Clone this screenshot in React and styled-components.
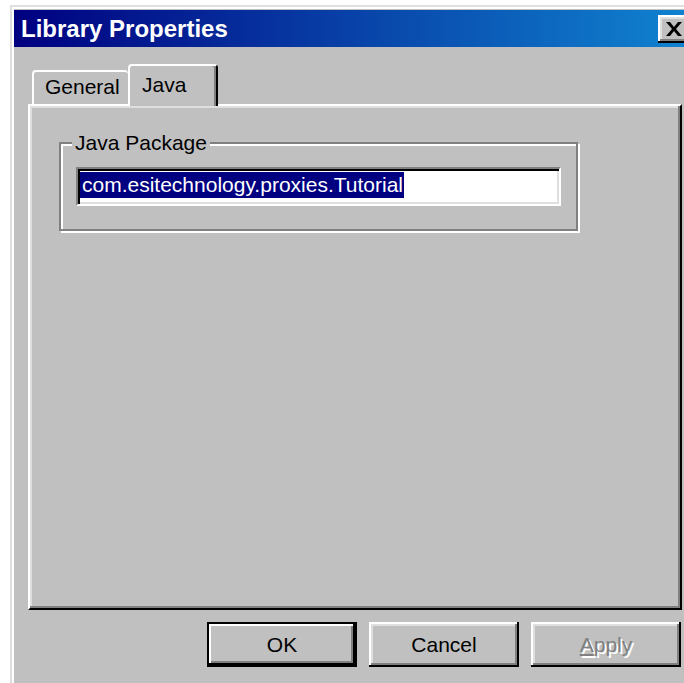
import React from "react";
import styled, { createGlobalStyle } from "styled-components";

const GlobalStyle = createGlobalStyle`
  html, body {
    margin: 0;
    padding: 0;
    background: #ffffff;
    overflow: hidden;
  }
  body {
    font-family: "Liberation Sans", Arial, sans-serif;
  }
`;

const Page = styled.div`
  padding: 5px 0 0 10px;
`;

const Window = styled.div`
  box-sizing: border-box;
  width: 690px;
  height: 700px;
  background: #c0c0c0;
  border-top: 2px solid #dfdfdf;
  border-left: 2px solid #dfdfdf;
  box-shadow: inset 2px 2px 0 #ffffff;
  padding: 3px 6px 0 2px;
  display: flex;
  flex-direction: column;
`;

const TitleBar = styled.div`
  height: 37px;
  display: flex;
  align-items: center;
  padding-left: 7px;
  background: linear-gradient(to right, #000080, #1084d0);
  color: #ffffff;
  font-weight: bold;
  font-size: 24px;
  line-height: 37px;
`;

const CloseButton = styled.button`
  margin-left: auto;
  margin-right: 4px;
  width: 32px;
  height: 28px;
  padding: 0;
  border: none;
  background: #c0c0c0;
  display: flex;
  align-items: center;
  justify-content: center;
  box-shadow: inset -2px -2px 0 #000000, inset 2px 2px 0 #ffffff,
    inset -4px -4px 0 #808080, inset 4px 4px 0 #dfdfdf;
`;

const Body = styled.div`
  padding: 17px 12px 0 14px;
  display: flex;
  flex-direction: column;
  font-size: 21px;
  color: #000000;
`;

const TabStrip = styled.div`
  display: flex;
  align-items: flex-end;
  padding-left: 4px;
  height: 40px;
`;

const Tab = styled.div`
  box-sizing: border-box;
  width: ${(p) => p.$width}px;
  height: ${(p) => (p.$active ? 42 : 34)}px;
  margin-bottom: ${(p) => (p.$active ? -2 : 0)}px;
  position: relative;
  z-index: ${(p) => (p.$active ? 1 : 0)};
  background: #c0c0c0;
  border-top: 2px solid #ffffff;
  border-left: 2px solid #ffffff;
  border-right: ${(p) => (p.$active ? "2px solid #000000" : "none")};
  border-radius: 4px 4px 0 0;
  box-shadow: ${(p) => (p.$active ? "inset -2px 0 0 #808080" : "none")};
  padding: ${(p) => (p.$active ? "7px 0 0 12px" : "3px 0 0 11px")};
  line-height: 24px;
`;

const Panel = styled.div`
  box-sizing: border-box;
  width: 654px;
  height: 506px;
  border-style: solid;
  border-width: 2px;
  border-color: #ffffff #000000 #000000 #ffffff;
  box-shadow: inset -2px -2px 0 #808080, inset 2px 2px 0 #dfdfdf;
  padding: 25px 0 0 29px;
`;

const Group = styled.fieldset`
  box-sizing: border-box;
  width: 519px;
  margin: 0;
  padding: 12px 15px 23px 15px;
  border: 2px solid #808080;
  box-shadow: inset 2px 2px 0 #ffffff, 2px 2px 0 #ffffff;
  min-width: 0;
`;

const Legend = styled.legend`
  padding: 0 3px;
  margin-left: -4px;
  line-height: 24px;
  background: #c0c0c0;
`;

const TextField = styled.div`
  box-sizing: border-box;
  height: 39px;
  background: #ffffff;
  border-style: solid;
  border-width: 2px;
  border-color: #808080 #ffffff #ffffff #808080;
  box-shadow: inset 2px 2px 0 #000000, inset -2px -2px 0 #dfdfdf;
  padding: 3px 0 0 2px;
  white-space: nowrap;
  overflow: hidden;
`;

const Selection = styled.span`
  display: inline-block;
  background: #000080;
  color: #ffffff;
  line-height: 26px;
  padding: 0 1px 0 2px;
`;

const ButtonRow = styled.div`
  display: flex;
  justify-content: flex-end;
  gap: 12px;
  margin-top: 12px;
  padding-right: 1px;
`;

const Button = styled.button`
  box-sizing: border-box;
  width: 150px;
  height: 45px;
  padding: 0;
  background: #c0c0c0;
  font-family: "Liberation Sans", Arial, sans-serif;
  font-size: 21px;
  color: ${(p) => (p.disabled ? "#808080" : "#000000")};
  text-shadow: ${(p) => (p.disabled ? "2px 2px 0 #ffffff" : "none")};
  border: ${(p) => (p.$default ? "2px solid #000000" : "none")};
  box-shadow: inset -2px -2px 0 #000000, inset 2px 2px 0 #ffffff,
    inset -4px -4px 0 #808080, inset 4px 4px 0 #dfdfdf;
  ${(p) =>
    p.$default &&
    `box-shadow: inset -2px -2px 0 #000000, inset 2px 2px 0 #ffffff,
      inset -4px -4px 0 #808080;`}
`;

const CloseIcon = () => (
  <svg width="18" height="14" viewBox="0 0 18 14">
    <path d="M1 0h4l4 5 4-5h4l-6 7 6 7h-4l-4-5-4 5H1l6-7z" fill="#000" />
  </svg>
);

export default function App() {
  return (
    <>
      <GlobalStyle />
      <Page>
        <Window>
          <TitleBar>
            Library Properties
            <CloseButton>
              <CloseIcon />
            </CloseButton>
          </TitleBar>
          <Body>
            <TabStrip>
              <Tab $width={96}>General</Tab>
              <Tab $width={90} $active>
                Java
              </Tab>
            </TabStrip>
            <Panel>
              <Group>
                <Legend>Java Package</Legend>
                <TextField>
                  <Selection>com.esitechnology.proxies.Tutorial</Selection>
                </TextField>
              </Group>
            </Panel>
            <ButtonRow>
              <Button $default>OK</Button>
              <Button>Cancel</Button>
              <Button disabled>
                <u>A</u>pply
              </Button>
            </ButtonRow>
          </Body>
        </Window>
      </Page>
    </>
  );
}
